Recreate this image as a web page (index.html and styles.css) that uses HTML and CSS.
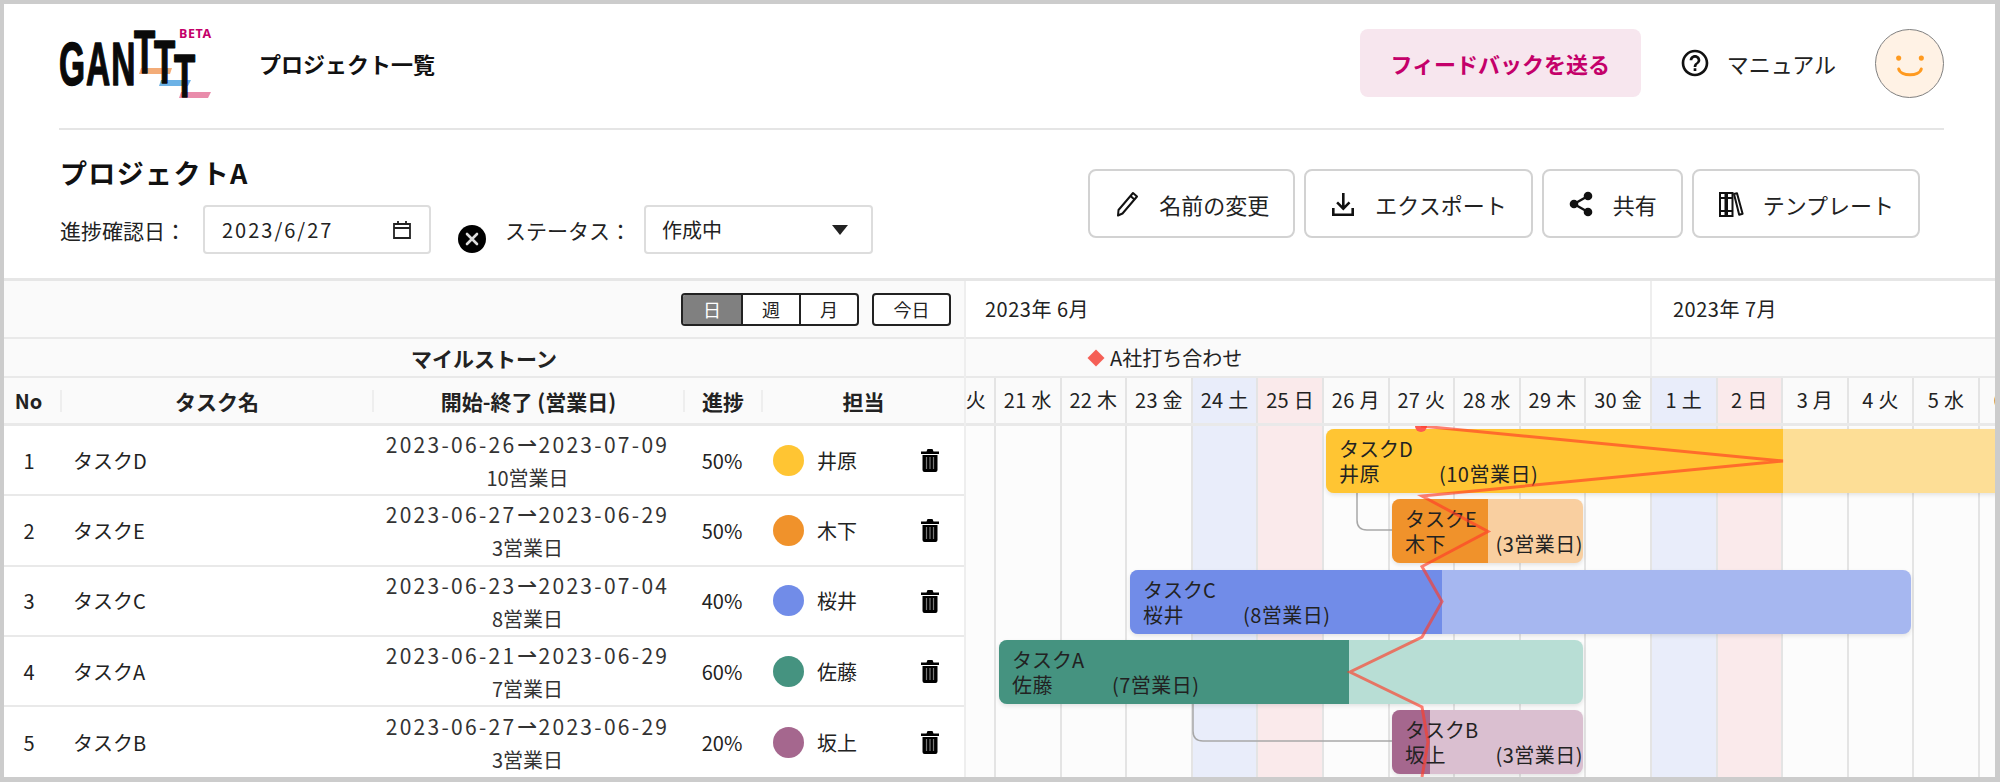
FILE: index.html
```html
<!DOCTYPE html>
<html lang="ja">
<head>
<meta charset="utf-8">
<title>プロジェクトA</title>
<link rel="stylesheet" href="styles.css">
</head>
<body>
<div class="frame">
  <header class="topbar">
    <div class="logo">
      <svg width="152" height="72" viewBox="0 0 152 72" class="logo-svg">
        <polygon class="lb-o" points="82,40 113,40 111,46 80,46"/>
        <polygon class="lb-b" points="102,52 132,52 129,58 100,58"/>
        <polygon class="lb-p" points="122,64 152,64 149,70 120,70"/>
        <text class="lt lt-gan" transform="translate(0 57) scale(.54 1)" font-size="62">GAN</text>
        <text class="lt" transform="translate(75 45) scale(.56 1)" font-size="62">T</text>
        <text class="lt" transform="translate(95 55) scale(.56 1)" font-size="62">T</text>
        <text class="lt" transform="translate(115 69) scale(.56 1)" font-size="62">T</text>
        <text class="beta" x="120" y="10">BETA</text>
      </svg>
    </div>
    <a class="nav-link">プロジェクト一覧</a>
    <div class="top-actions">
      <button class="feedback">フィードバックを送る</button>
      <div class="manual">
        <svg class="ic-help" viewBox="0 0 24 24" width="32" height="32"><path d="M11 18h2v-2h-2v2zm1-16C6.48 2 2 6.48 2 12s4.48 10 10 10 10-4.48 10-10S17.52 2 12 2zm0 18c-4.41 0-8-3.59-8-8s3.59-8 8-8 8 3.59 8 8-3.59 8-8 8zm0-14c-2.21 0-4 1.79-4 4h2c0-1.1.9-2 2-2s2 .9 2 2c0 2-3 1.75-3 5h2c0-2.25 3-2.5 3-5 0-2.21-1.79-4-4-4z"/></svg>
        <span>マニュアル</span>
      </div>
      <div class="avatar">
        <svg viewBox="0 0 68 68" width="68" height="68"><circle cx="23" cy="29" r="2.6" class="smile-f"/><circle cx="46" cy="29" r="2.6" class="smile-f"/><path d="M23 40c2 8 21 8 23 0" class="smile-s"/></svg>
      </div>
    </div>
  </header>

  <section class="project">
    <div class="project-left">
      <h1 class="title">プロジェクトA</h1>
      <div class="meta">
        <label class="meta-label">進捗確認日：</label>
        <div class="date-input">
          <span>2023/6/27</span>
          <svg viewBox="0 0 20 20" width="20" height="20" class="cal"><path d="M2 4h16v14H2zM2 8h16M6 1v4M14 1v4"/></svg>
        </div>
        <svg class="clear" viewBox="0 0 28 28" width="28" height="28"><circle cx="14" cy="14" r="14"/><path d="M9 9l10 10M19 9L9 19"/></svg>
        <label class="meta-label status-label">ステータス：</label>
        <div class="select"><span>作成中</span><i class="caret"></i></div>
      </div>
    </div>
    <div class="project-btns">
      <button class="btn">
        <svg viewBox="0 0 26 26" width="26" height="26" class="ic"><path d="M4 24.5l.5-5.500L19 2l4 3.500L8.500 22.500z" fill="none" stroke="#111" stroke-width="2" stroke-linejoin="round"/><path d="M16.500 5l4 3.500" fill="none" stroke="#111" stroke-width="2"/></svg>
        <span>名前の変更</span>
      </button>
      <button class="btn">
        <svg viewBox="0 0 26 26" width="26" height="26" class="ic"><path d="M12 2h2.600v12.500l4-4 1.800 1.800-7.100 7.100-7.100-7.100 1.800-1.800 4 4z"/><path d="M2 17h2.600v5.400h16.800V17H24v8H2z"/></svg>
        <span>エクスポート</span>
      </button>
      <button class="btn">
        <svg viewBox="0 0 26 26" width="26" height="26" class="ic"><circle cx="20" cy="5" r="4.300"/><circle cx="6" cy="13" r="4.300"/><circle cx="20" cy="21" r="4.300"/><path d="M20 5L6 13l14 8" fill="none" stroke="#111" stroke-width="2.400"/></svg>
        <span>共有</span>
      </button>
      <button class="btn">
        <svg viewBox="0 0 26 26" width="26" height="26" class="ic"><path d="M2 2h5.500v23H2zM9 2h5.500v23H9z" fill="none" stroke="#111" stroke-width="2"/><path d="M2 7h5.500M9 7h5.500M2 20h5.500M9 20h5.500" stroke="#111" stroke-width="2"/><path d="M16 3l3-.8 5.600 20.600-3.400 1z" fill="none" stroke="#111" stroke-width="2" stroke-linejoin="round"/></svg>
        <span>テンプレート</span>
      </button>
    </div>
  </section>

  <section class="gantt">
    <div class="pane-left">
      <div class="tools">
        <div class="seg"><span class="seg-item active">日</span><span class="seg-item">週</span><span class="seg-item">月</span></div>
        <span class="today">今日</span>
      </div>
      <div class="milestone-head">マイルストーン</div>
      <div class="cols head">
        <div class="h h-no">No</div>
        <div class="h">タスク名</div>
        <div class="h">開始-終了 (営業日)</div>
        <div class="h">進捗</div>
        <div class="h">担当</div>
      </div>

      <div class="cols row">
        <div class="c-no">1</div><div class="c-name">タスクD</div>
        <div class="c-date"><span class="range">2023-06-26<span class="arr">⇀</span>2023-07-09</span><span class="bdays">10営業日</span></div>
        <div class="c-pct">50%</div>
        <div class="c-who"><i class="dot yellow"></i><span>井原</span><svg class="trash" viewBox="0 0 18 24" width="18" height="24"><path d="M0 3.500h5.500L6.500 1h5l1 2.500H18V6H0zM1.500 7h15v15a2 2 0 0 1-2 2h-11a2 2 0 0 1-2-2z"/><path class="rib" d="M5.500 9v12M9 9v12M12.500 9v12"/></svg></div>
      </div>
      <div class="cols row">
        <div class="c-no">2</div><div class="c-name">タスクE</div>
        <div class="c-date"><span class="range">2023-06-27<span class="arr">⇀</span>2023-06-29</span><span class="bdays">3営業日</span></div>
        <div class="c-pct">50%</div>
        <div class="c-who"><i class="dot orange"></i><span>木下</span><svg class="trash" viewBox="0 0 18 24" width="18" height="24"><path d="M0 3.500h5.500L6.500 1h5l1 2.500H18V6H0zM1.500 7h15v15a2 2 0 0 1-2 2h-11a2 2 0 0 1-2-2z"/><path class="rib" d="M5.500 9v12M9 9v12M12.500 9v12"/></svg></div>
      </div>
      <div class="cols row">
        <div class="c-no">3</div><div class="c-name">タスクC</div>
        <div class="c-date"><span class="range">2023-06-23<span class="arr">⇀</span>2023-07-04</span><span class="bdays">8営業日</span></div>
        <div class="c-pct">40%</div>
        <div class="c-who"><i class="dot blue"></i><span>桜井</span><svg class="trash" viewBox="0 0 18 24" width="18" height="24"><path d="M0 3.500h5.500L6.500 1h5l1 2.500H18V6H0zM1.500 7h15v15a2 2 0 0 1-2 2h-11a2 2 0 0 1-2-2z"/><path class="rib" d="M5.500 9v12M9 9v12M12.500 9v12"/></svg></div>
      </div>
      <div class="cols row">
        <div class="c-no">4</div><div class="c-name">タスクA</div>
        <div class="c-date"><span class="range">2023-06-21<span class="arr">⇀</span>2023-06-29</span><span class="bdays">7営業日</span></div>
        <div class="c-pct">60%</div>
        <div class="c-who"><i class="dot green"></i><span>佐藤</span><svg class="trash" viewBox="0 0 18 24" width="18" height="24"><path d="M0 3.500h5.500L6.500 1h5l1 2.500H18V6H0zM1.500 7h15v15a2 2 0 0 1-2 2h-11a2 2 0 0 1-2-2z"/><path class="rib" d="M5.500 9v12M9 9v12M12.500 9v12"/></svg></div>
      </div>
      <div class="cols row last">
        <div class="c-no">5</div><div class="c-name">タスクB</div>
        <div class="c-date"><span class="range">2023-06-27<span class="arr">⇀</span>2023-06-29</span><span class="bdays">3営業日</span></div>
        <div class="c-pct">20%</div>
        <div class="c-who"><i class="dot purple"></i><span>坂上</span><svg class="trash" viewBox="0 0 18 24" width="18" height="24"><path d="M0 3.500h5.500L6.500 1h5l1 2.500H18V6H0zM1.500 7h15v15a2 2 0 0 1-2 2h-11a2 2 0 0 1-2-2z"/><path class="rib" d="M5.500 9v12M9 9v12M12.500 9v12"/></svg></div>
      </div>
    </div>

    <div class="pane-right">
      <div class="months">
        <div class="month june">2023年 6月</div>
        <div class="month july">2023年 7月</div>
      </div>
      <div class="ms-row">
        <div class="ms-june"><span class="ms-item"><i class="diamond"></i>A社打ち合わせ</span></div>
        <div class="ms-july"></div>
      </div>
      <div class="days">
        <div class="day">20 火</div><div class="day">21 水</div><div class="day">22 木</div><div class="day">23 金</div>
        <div class="day sat">24 土</div><div class="day sun">25 日</div><div class="day">26 月</div><div class="day">27 火</div>
        <div class="day">28 水</div><div class="day">29 木</div><div class="day">30 金</div>
        <div class="day sat">1 土</div><div class="day sun">2 日</div><div class="day">3 月</div><div class="day">4 火</div><div class="day">5 水</div><div class="day">6 木</div>
      </div>
      <div class="chart">
        <div class="grid">
          <div class="gc"></div><div class="gc"></div><div class="gc"></div><div class="gc"></div>
          <div class="gc sat"></div><div class="gc sun"></div><div class="gc"></div><div class="gc"></div>
          <div class="gc"></div><div class="gc"></div><div class="gc"></div>
          <div class="gc sat"></div><div class="gc sun"></div><div class="gc"></div><div class="gc"></div><div class="gc"></div><div class="gc"></div>
        </div>
        <svg class="deps" width="1030" height="352"><path d="M391 67V94Q391 104 401 104H426"/><path d="M227 278V305Q227 315 237 315H426"/></svg>

        <div class="bar yellow-l" style="left:360px;top:3px;width:913px"><i class="fill yellow" style="width:50%"></i><div class="bar-t"><div>タスクD</div><div class="bar-sub"><span class="bar-who">井原</span><span>(10営業日)</span></div></div></div>
        <div class="bar orange-l" style="left:426px;top:73px;width:191px"><i class="fill orange" style="width:50%"></i><div class="bar-t"><div>タスクE</div><div class="bar-sub"><span class="bar-who">木下</span><span>(3営業日)</span></div></div></div>
        <div class="bar blue-l" style="left:164px;top:144px;width:781px"><i class="fill blue" style="width:40%"></i><div class="bar-t"><div>タスクC</div><div class="bar-sub"><span class="bar-who">桜井</span><span>(8営業日)</span></div></div></div>
        <div class="bar green-l" style="left:33px;top:214px;width:584px"><i class="fill green" style="width:60%"></i><div class="bar-t"><div>タスクA</div><div class="bar-sub"><span class="bar-who">佐藤</span><span>(7営業日)</span></div></div></div>
        <div class="bar purple-l" style="left:426px;top:284px;width:191px"><i class="fill purple" style="width:20%"></i><div class="bar-t"><div>タスクB</div><div class="bar-sub"><span class="bar-who">坂上</span><span>(3営業日)</span></div></div></div>

        <svg class="todayline" width="1030" height="352"><circle cx="455" cy="0" r="6"/><polyline points="455,0 817,35 456,70 522,105.5 456,140.5 476,175.5 456,211 384,246 456,281 462,316 456,351"/></svg>
      </div>
    </div>
  </section>
</div>
</body>
</html>
```

FILE: styles.css
```css
* { box-sizing: border-box; }
html, body { margin: 0; padding: 0; }
body {
  width: 2000px;
  height: 782px;
  overflow: hidden;
  background: #fff;
  color: #222;
  font-family: "Noto Sans CJK JP", "Noto Sans", sans-serif;
  font-size: 20px;
}
button { font: inherit; color: inherit; cursor: pointer; }

.frame {
  width: 2000px;
  height: 782px;
  border: solid #ccc;
  border-width: 4px 5px 5px 4px;
  display: flex;
  flex-direction: column;
  overflow: hidden;
}

/* top bar */
.topbar {
  flex: none;
  height: 126px;
  margin: 0 51px 0 55px;
  border-bottom: 2px solid #e5e5e5;
  display: flex;
  align-items: center;
  padding-bottom: 6px;
}
.logo { width: 200px; height: 72px; margin-top: 1px; }
.logo-svg { display: block; overflow: visible; }
.lt { font-family: "Liberation Sans", sans-serif; font-weight: 700; fill: #0a0a0a; stroke: #0a0a0a; stroke-width: 1.5; stroke-linejoin: round; }
.lt-gan { letter-spacing: 2px; }
.beta { font-family: "Noto Sans", sans-serif; font-weight: 700; font-size: 12.5px; fill: #c4006a; letter-spacing: .05em; }
.lb-o { fill: #f3ac78; }
.lb-b { fill: #6cb2e6; }
.lb-p { fill: #e98cab; }
.nav-link { font-size: 22px; font-weight: 700; color: #111; }
.top-actions { margin-left: auto; display: flex; align-items: center; }
.feedback {
  width: 281px;
  height: 68px;
  border: 0;
  border-radius: 8px;
  background: #f7e6ee;
  color: #c4006a;
  font-weight: 700;
  font-size: 22px;
}
.manual { display: flex; align-items: center; gap: 16px; margin-left: 38px; font-size: 22px; color: #222; }
.ic-help { fill: #111; }
.avatar {
  width: 69px;
  height: 69px;
  margin-left: 39px;
  border: 1.5px solid #808080;
  border-radius: 50%;
  background: #fff2e5;
  display: flex;
  align-items: center;
  justify-content: center;
}
.smile-f { fill: #ff9a1f; }
.smile-s { fill: none; stroke: #ff9a1f; stroke-width: 3; stroke-linecap: round; }

/* project section */
.project {
  flex: none;
  height: 148px;
  padding: 23px 75px 0 56px;
  display: flex;
  justify-content: space-between;
}
.title { margin: 0; height: 40px; font-size: 27px; line-height: 40px; letter-spacing: .05em; font-weight: 700; color: #111; }
.meta { margin-top: 12px; display: flex; align-items: center; height: 49px; }
.meta-label { font-size: 21px; color: #222; }
.date-input {
  width: 228px;
  height: 49px;
  margin-left: 17px;
  padding: 0 17px;
  border: 2px solid #ddd;
  border-radius: 4px;
  display: flex;
  align-items: center;
  justify-content: space-between;
  letter-spacing: .1em;
}
.cal { fill: none; stroke: #222; stroke-width: 1.8; }
.clear { margin: 18px 0 0 27px; }
.clear circle { fill: #000; }
.clear path { stroke: #ddd; stroke-width: 2.6; stroke-linecap: round; }
.status-label { margin-left: 19px; }
.select {
  width: 229px;
  height: 49px;
  margin-left: 13px;
  padding: 0 23px 0 16px;
  border: 2px solid #ddd;
  border-radius: 4px;
  display: flex;
  align-items: center;
  justify-content: space-between;
}
.caret {
  width: 0;
  height: 0;
  border-left: 8.5px solid transparent;
  border-right: 8.5px solid transparent;
  border-top: 10px solid #222;
}
.project-btns { display: flex; gap: 9px; padding-top: 16px; align-items: flex-start; }
.btn {
  height: 69px;
  padding: 0 24px;
  display: flex;
  align-items: center;
  gap: 19px;
  background: #fff;
  border: 2px solid #d2d2d2;
  border-radius: 8px;
  font-size: 22px;
  color: #222;
}
.ic { fill: #111; flex: none; }

/* gantt */
.gantt {
  flex: 1;
  min-height: 0;
  display: flex;
  border-top: 3px solid #e6e6e6;
}
.pane-left {
  width: 962px;
  flex: none;
  border-right: 2px solid #eee;
  background: #fff;
}
.tools {
  height: 58px;
  padding-right: 13px;
  background: #fafafa;
  border-bottom: 2px solid #e9e9e9;
  display: flex;
  align-items: center;
  justify-content: flex-end;
  gap: 13px;
}
.seg { display: flex; height: 33px; border: 2px solid #222; border-radius: 4px; overflow: hidden; background: #fff; }
.seg-item { width: 58px; display: flex; align-items: center; justify-content: center; font-size: 18px; }
.seg-item + .seg-item { border-left: 2px solid #222; }
.seg-item.active { background: #808080; color: #fff; }
.today {
  width: 79px;
  height: 33px;
  border: 2px solid #222;
  border-radius: 4px;
  background: #fff;
  display: flex;
  align-items: center;
  justify-content: center;
  font-size: 18px;
}
.milestone-head {
  height: 39px;
  background: #fafafa;
  border-bottom: 2px solid #e9e9e9;
  display: flex;
  align-items: center;
  justify-content: center;
  font-weight: 700;
  font-size: 21px;
}
.cols {
  display: grid;
  grid-template-columns: 56px 312px 311px 78px 1fr;
  align-items: center;
}
.head { height: 48px; background: #fafafa; border-bottom: 3px solid #e9e9e9; }
.h {
  height: 22px;
  line-height: 22px;
  text-align: center;
  font-weight: 700;
  font-size: 21px;
  border-left: 2px solid #eee;
}
.h-no { border-left: 0; font-size: 20px; padding-right: 7px; }
.row { height: 70.3px; border-bottom: 2px solid #e9e9e9; text-align: center; }
.row.last { border-bottom: 0; }
.c-no { padding-right: 6px; }
.c-name { text-align: left; padding-left: 13px; }
.c-date { line-height: 33px; color: #333; }
.range, .bdays { display: block; }
.range { font-size: 21px; letter-spacing: 2.3px; white-space: nowrap; }
.arr { font-size: 24px; letter-spacing: 0; margin: 0 2px 0 0; }
.c-who { display: flex; align-items: center; padding-left: 12px; }
.dot { width: 31px; height: 31px; border-radius: 50%; flex: none; margin-right: 13px; }
.trash { margin-left: auto; margin-right: 25px; fill: #000; }
.rib { fill: none; stroke: #777; stroke-width: 1.2; }

.yellow { background: #ffc533; }
.yellow-l { background: #fdde96; }
.orange { background: #f0922b; }
.orange-l { background: #f9cfa0; }
.blue { background: #718ce8; }
.blue-l { background: #a6b7f0; }
.green { background: #459380; }
.green-l { background: #b8ded5; }
.purple { background: #a5678e; }
.purple-l { background: #dabfd0; }

.pane-right { flex: 1; min-width: 0; overflow: hidden; display: flex; flex-direction: column; }
.months { height: 58px; flex: none; display: flex; border-bottom: 2px solid #e9e9e9; background: #fff; }
.month { display: flex; align-items: center; letter-spacing: .5px; padding-bottom: 2px; }
.june { width: 686px; padding-left: 19px; border-right: 2px solid #eee; }
.july { padding-left: 21px; flex: 1; }
.ms-row { height: 39px; flex: none; display: flex; background: #fafafa; border-bottom: 2px solid #e9e9e9; }
.ms-june { width: 686px; border-right: 2px solid #eee; padding-left: 124px; }
.ms-july { flex: 1; }
.ms-item { display: inline-flex; align-items: center; height: 37px; gap: 8px; }
.diamond { width: 12px; height: 12px; background: #f55f56; transform: rotate(45deg); }
.days { height: 48px; flex: none; display: flex; margin-left: -35.6px; background: #fafafa; border-bottom: 3px solid #e9e9e9; }
.day {
  width: 65.6px;
  flex: none;
  display: flex;
  align-items: center;
  justify-content: center;
  border-right: 2px solid #e4e4e4;
  letter-spacing: .3px;
  white-space: pre;
  padding-bottom: 2px;
}
.day.sat, .gc.sat { background: #e9edfa; }
.day.sun, .gc.sun { background: #faeaeb; }
.chart { position: relative; flex: 1; min-height: 0; overflow: hidden; background: #fcfcfc; }
.grid { display: flex; height: 100%; margin-left: -35.6px; }
.gc { width: 65.6px; flex: none; border-right: 2px solid #e4e4e4; }
.deps { position: absolute; left: 0; top: 0; fill: none; stroke: #a8a8a8; stroke-width: 1.5; }
.bar {
  position: absolute;
  height: 64px;
  border-radius: 8px;
  box-shadow: 0 2px 4px rgba(0, 0, 0, .1);
}
.fill { position: absolute; left: 0; top: 0; bottom: 0; border-radius: 8px 0 0 8px; }
.bar-t { position: relative; padding: 8px 0 0 13px; line-height: 24px; white-space: nowrap; color: #222; }
.bar-sub { display: flex; letter-spacing: .5px; padding-top: 1px; }
.bar-who { width: 100px; }
.todayline { position: absolute; left: 0; top: 0; }
.todayline polyline { fill: none; stroke: rgba(255, 60, 40, .65); stroke-width: 3; }
.todayline circle { fill: #ff5a50; }
```
